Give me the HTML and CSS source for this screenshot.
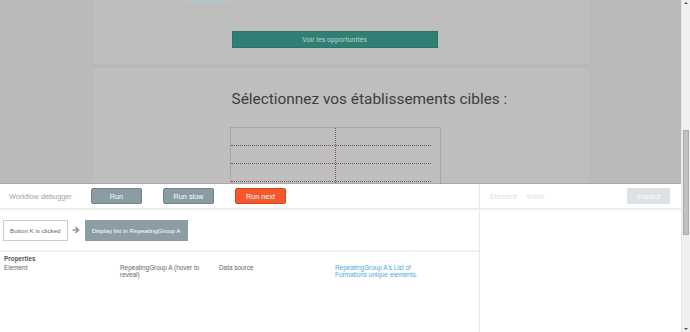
FILE: index.html
```html
<!DOCTYPE html>
<html lang="fr">

<head>
    <meta charset="UTF-8">
    <meta name="viewport" content="width=device-width, initial-scale=1.0">
    <title>Workflow debugger</title>
    <link rel="stylesheet" href="styles.css">
</head>

<body>
    <div class="window">
        <div class="viewport">
            <!-- Page behind the debugger (dimmed) -->
            <div class="page">
                <div class="gutter"></div>
                <div class="column">
                    <section class="card card-top">
                        <div class="promo-strip"></div>
                        <button class="btn-teal">Voir les opportunités</button>
                    </section>
                    <section class="card card-select">
                        <h2 class="title">Sélectionnez vos établissements cibles :</h2>
                        <div class="grid-table">
                            <div class="grid-row"><span class="grid-cell"></span><span></span></div>
                            <div class="grid-row"><span class="grid-cell"></span><span></span></div>
                            <div class="grid-row"><span class="grid-cell"></span><span></span></div>
                            <div class="grid-row"><span class="grid-cell"></span><span></span></div>
                        </div>
                    </section>
                </div>
                <div class="gutter"></div>
            </div>

            <!-- Debugger panel -->
            <div class="debugger">
                <div class="dbg-main">
                    <div class="dbg-bar">
                        <span class="dbg-label">Workflow debugger</span>
                        <button class="dbg-btn">Run</button>
                        <button class="dbg-btn">Run slow</button>
                        <button class="dbg-btn dbg-btn-next">Run next</button>
                    </div>
                    <div class="dbg-flow">
                        <div class="step">Button K is clicked</div>
                        <span class="step-arrow">
                            <svg width="8" height="8" viewBox="0 0 8 8">
                                <path d="M0.5 4 H6 M3.5 1.2 L6.5 4 L3.5 6.8" fill="none" stroke="#8a9ea3" stroke-width="1.7"/>
                            </svg>
                        </span>
                        <div class="step step-active">Display list in RepeatingGroup A</div>
                    </div>
                    <div class="dbg-props">
                        <div class="props-title">Properties</div>
                        <div class="props-row">
                            <span>Element</span>
                            <span>RepeatingGroup A (hover to reveal)</span>
                            <span>Data source</span>
                            <span class="props-link">RepeatingGroup A's List of Formations unique elements.</span>
                        </div>
                    </div>
                </div>
                <div class="dbg-side">
                    <div class="dbg-bar side-bar">
                        <span class="side-tab">Element</span>
                        <span class="side-tab">Index</span>
                        <button class="inspect-btn">Inspect</button>
                    </div>
                </div>
            </div>
        </div>

        <!-- Browser scrollbar -->
        <div class="scrollbar">
            <span class="arrow arrow-up"></span>
            <div class="track">
                <div class="thumb"></div>
            </div>
            <span class="arrow arrow-down"></span>
        </div>
    </div>
</body>

</html>
```

FILE: styles.css
```css
* {
    margin: 0;
    padding: 0;
    box-sizing: border-box;
}

body {
    width: 690px;
    height: 332px;
    overflow: hidden;
    font-family: "Liberation Sans", Arial, sans-serif;
    background-color: #fff;
}

button {
    font-family: inherit;
    cursor: pointer;
}

/* Window = content + scrollbar */
.window {
    display: flex;
    height: 332px;
}

.viewport {
    width: 681px;
    display: flex;
    flex-direction: column;
}

/* Dimmed page */
.page {
    height: 184px;
    flex-shrink: 0;
    display: flex;
    overflow: hidden;
    background-color: #bababa;
    border-bottom: 1px solid #a9a9a9;
}

.gutter {
    flex: 1;
}

.column {
    width: 496px;
    display: flex;
    flex-direction: column;
    gap: 4px;
    background-color: #b8b8b8;
}

.card {
    flex-shrink: 0;
    background-color: #bebebe;
    padding-left: 139px;
}

.card-top {
    height: 64px;
    display: flex;
    flex-direction: column;
}

.promo-strip {
    width: 50px;
    height: 2px;
    margin-left: -48px;
    background-color: #b3c6cf;
}

.btn-teal {
    margin-top: 29px;
    width: 206px;
    height: 17px;
    border: 1px solid #2a7368;
    background-color: #2f7f74;
    color: #bdd3cf;
    font-family: Roboto, sans-serif;
    font-size: 7px;
}

.card-select {
    flex: 1 0 auto;
    padding-top: 21px;
}

.title {
    font-family: Roboto, sans-serif;
    font-weight: normal;
    font-size: 15.4px;
    line-height: 20px;
    color: #3d3d3d;
    white-space: nowrap;
}

.grid-table {
    margin-top: 18px;
    margin-left: -2px;
    width: 211px;
    border: 1px solid #a6a6a6;
    padding-right: 9px;
}

.grid-row {
    display: flex;
    height: 18px;
    border-bottom: 1px dotted #7d525a;
}

.grid-cell {
    width: 105px;
    border-right: 1px dotted #7d525a;
}

/* Debugger */
.debugger {
    flex: 1;
    display: flex;
    background-color: #fff;
}

.dbg-main {
    width: 480px;
    border-right: 1px solid #e8e8e8;
    display: flex;
    flex-direction: column;
}

.dbg-side {
    flex: 1;
}

.dbg-bar {
    height: 26px;
    display: flex;
    align-items: center;
    gap: 21px;
    padding-left: 9px;
    border-bottom: 2px solid #eeeeee;
}

.dbg-label {
    width: 61px;
    font-size: 7.3px;
    color: #9da3a5;
    white-space: nowrap;
}

.dbg-btn {
    width: 51px;
    height: 16px;
    border: 1px solid #6f8389;
    border-radius: 2px;
    background-color: #889ca1;
    color: #fff;
    font-size: 7.3px;
}

.dbg-btn-next {
    border-color: #d9471f;
    background-color: #f6572d;
}

.dbg-flow {
    height: 42px;
    display: flex;
    align-items: center;
    padding-left: 3px;
    border-bottom: 2px solid #f0f0f0;
}

.step {
    height: 21px;
    padding: 0 6px;
    display: flex;
    align-items: center;
    border: 1px solid #cccccc;
    font-size: 6.2px;
    color: #666;
    white-space: nowrap;
}

.step-arrow {
    width: 17px;
    display: flex;
    justify-content: center;
}

.step-active {
    width: 103px;
    justify-content: center;
    padding: 0;
    border-color: #8a9ea3;
    background-color: #8a9ea3;
    color: #fff;
}

.dbg-props {
    padding: 3px 4px 0;
    font-size: 6.4px;
    line-height: 7px;
    color: #666;
}

.props-title {
    font-weight: bold;
    color: #555;
    margin-bottom: 2px;
}

.props-row {
    display: grid;
    grid-template-columns: 116px 99px 116px 90px;
}

.props-link {
    color: #4aa8e2;
}

.side-bar {
    gap: 0;
    padding-left: 10px;
    padding-right: 11px;
}

.side-tab {
    font-size: 7.3px;
    color: #dddddd;
    margin-right: 10px;
}

.inspect-btn {
    margin-left: auto;
    width: 43px;
    height: 16px;
    border: none;
    border-radius: 2px;
    background-color: #dce1e3;
    color: #fff;
    font-size: 7.3px;
}

/* Scrollbar */
.scrollbar {
    width: 9px;
    display: flex;
    flex-direction: column;
    align-items: center;
    background-color: #f0f0f0;
    border-left: 1px solid #e6e6e6;
}

.track {
    flex: 1;
    width: 100%;
    padding-top: 124px;
}

.thumb {
    margin: 0 auto;
    width: 6px;
    height: 105px;
    background-color: #c1c1c1;
    border: 1px solid #a9a9a9;
}

.arrow {
    width: 0;
    height: 0;
    margin: 2px 0;
    border-left: 2px solid transparent;
    border-right: 2px solid transparent;
}

.arrow-up {
    border-bottom: 2px solid #505050;
}

.arrow-down {
    border-top: 2px solid #505050;
}
```
